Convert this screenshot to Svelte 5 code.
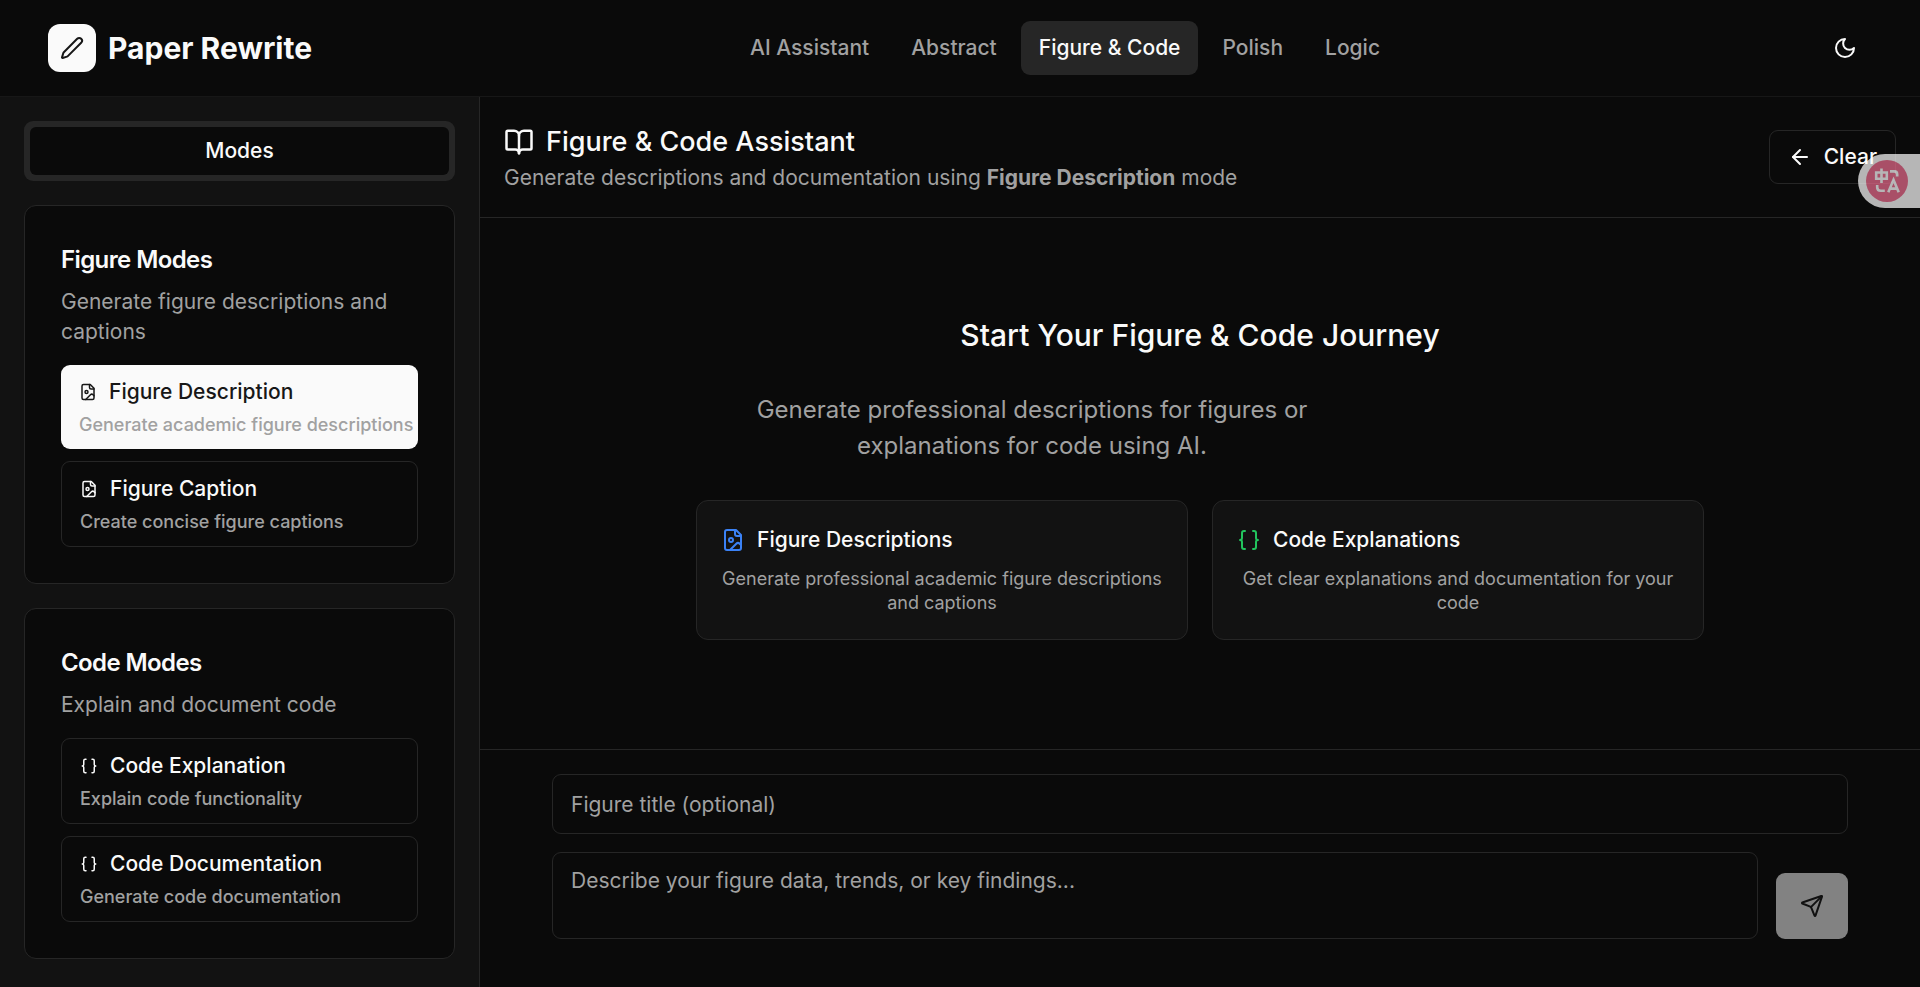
<script>
  const navItems = ['AI Assistant', 'Abstract', 'Figure & Code', 'Polish', 'Logic'];

  const groups = [
    {
      title: 'Figure Modes',
      text: 'Generate figure descriptions and captions',
      modes: [
        { name: 'Figure Description', text: 'Generate academic figure descriptions', icon: 'image' },
        { name: 'Figure Caption', text: 'Create concise figure captions', icon: 'image' }
      ]
    },
    {
      title: 'Code Modes',
      text: 'Explain and document code',
      modes: [
        { name: 'Code Explanation', text: 'Explain code functionality', icon: 'braces' },
        { name: 'Code Documentation', text: 'Generate code documentation', icon: 'braces' }
      ]
    }
  ];

  const features = [
    {
      title: 'Figure Descriptions',
      text: 'Generate professional academic figure descriptions and captions',
      icon: 'image',
      color: 'blue'
    },
    {
      title: 'Code Explanations',
      text: 'Get clear explanations and documentation for your code',
      icon: 'braces',
      color: 'green'
    }
  ];

  // Stroke paths on a 24x24 grid
  const icons = {
    pen: ['M21.174 6.812a1 1 0 0 0-3.986-3.987L3.842 16.174a2 2 0 0 0-.5.83l-1.321 4.352a.5.5 0 0 0 .623.622l4.353-1.32a2 2 0 0 0 .83-.497z'],
    moon: ['M12 3a6 6 0 0 0 9 9 9 9 0 1 1-9-9Z'],
    book: [
      'M12 7v14',
      'M3 18a1 1 0 0 1-1-1V4a1 1 0 0 1 1-1h5a4 4 0 0 1 4 4 4 4 0 0 1 4-4h5a1 1 0 0 1 1 1v13a1 1 0 0 1-1 1h-6a3 3 0 0 0-3 3 3 3 0 0 0-3-3z'
    ],
    arrow: ['m12 19-7-7 7-7', 'M19 12H5'],
    image: [
      'M15 2H6a2 2 0 0 0-2 2v16a2 2 0 0 0 2 2h12a2 2 0 0 0 2-2V7Z',
      'M14 2v4a2 2 0 0 0 2 2h4',
      'M12 12a2 2 0 1 1-4 0 2 2 0 0 1 4 0Z',
      'm20 17-1.296-1.296a2.41 2.41 0 0 0-3.408 0L9 22'
    ],
    braces: [
      'M8 3H7a2 2 0 0 0-2 2v5a2 2 0 0 1-2 2 2 2 0 0 1 2 2v5c0 1.1.9 2 2 2h1',
      'M16 21h1a2 2 0 0 0 2-2v-5c0-1.1.9-2 2-2a2 2 0 0 1-2-2V5a2 2 0 0 0-2-2h-1'
    ],
    send: [
      'M14.536 21.686a.5.5 0 0 0 .937-.024l6.5-19a.496.496 0 0 0-.635-.635l-19 6.5a.5.5 0 0 0-.024.937l7.93 3.18a2 2 0 0 1 1.112 1.11z',
      'm21.854 2.147-10.94 10.939'
    ]
  };

  let activeNav = $state('Figure & Code');
  let activeMode = $state('Figure Description');
  let title = $state('');
  let content = $state('');

  function clearAll() {
    title = '';
    content = '';
  }
</script>

{#snippet icon(name, size)}
  <svg
    width={size}
    height={size}
    viewBox="0 0 24 24"
    fill="none"
    stroke="currentColor"
    stroke-width="2"
    stroke-linecap="round"
    stroke-linejoin="round"
  >
    {#each icons[name] as d}
      <path {d} />
    {/each}
  </svg>
{/snippet}

<div class="app">
  <header class="topbar">
    <div class="brand">
      <span class="logo">{@render icon('pen', 24)}</span>
      <span class="brand-name">Paper Rewrite</span>
    </div>
    <nav>
      {#each navItems as item}
        <button class="nav-item" class:active={activeNav === item} onclick={() => (activeNav = item)}>{item}</button>
      {/each}
    </nav>
    <button class="theme" aria-label="Toggle theme">{@render icon('moon', 24)}</button>
  </header>

  <div class="body">
    <aside>
      <div class="tabs">
        <button class="tab">Modes</button>
      </div>
      {#each groups as group}
        <section class="card">
          <h3>{group.title}</h3>
          <p class="card-text">{group.text}</p>
          <div class="modes">
            {#each group.modes as mode}
              <button class="mode" class:selected={activeMode === mode.name} onclick={() => (activeMode = mode.name)}>
                <span class="mode-name">{@render icon(mode.icon, 18)}{mode.name}</span>
                <span class="mode-text">{mode.text}</span>
              </button>
            {/each}
          </div>
        </section>
      {/each}
    </aside>

    <main>
      <div class="main-header">
        <div>
          <h1>{@render icon('book', 30)}Figure & Code Assistant</h1>
          <p>Generate descriptions and documentation using <strong>{activeMode}</strong> mode</p>
        </div>
        <button class="clear" onclick={clearAll}>{@render icon('arrow', 24)}Clear</button>
      </div>

      <div class="empty">
        <div class="empty-inner">
          <h2>Start Your Figure & Code Journey</h2>
          <p class="lead">Generate professional descriptions for figures or explanations for code using AI.</p>
          <div class="features">
            {#each features as feature}
              <div class="feature">
                <div class="feature-title">
                  <span class="feature-icon {feature.color}">{@render icon(feature.icon, 24)}</span>
                  {feature.title}
                </div>
                <p>{feature.text}</p>
              </div>
            {/each}
          </div>
        </div>
      </div>

      <div class="composer">
        <input type="text" bind:value={title} placeholder="Figure title (optional)" />
        <div class="composer-row">
          <textarea bind:value={content} placeholder="Describe your figure data, trends, or key findings..."></textarea>
          <button class="send" aria-label="Send" disabled={!content}>{@render icon('send', 24)}</button>
        </div>
      </div>
    </main>
  </div>

  <div class="translate">
    <span class="translate-dot">
      <svg width="42" height="42" viewBox="0 0 42 42" fill="none" stroke="#fff" stroke-width="2.6">
        <path d="M10.2 12.5h10.6v6.3h-10.6zM15.5 8.5v14.5" />
        <path d="M24 11.4h4.2q3 0 3 3v2.2" />
        <path d="M11.2 25v2.2q0 3.6 3.6 3.6h4" />
        <path d="M22.3 32.2l5.2-12.4 5.2 12.4M24 28.6h7" />
      </svg>
    </span>
  </div>
</div>

<style>
  :global(body) {
    background-color: #0a0a0a;
  }

  .app {
    position: relative;
    display: flex;
    flex-direction: column;
    height: 100vh;
    overflow: hidden;
    background-color: #0a0a0a;
    color: #fafafa;
    font-family: Inter, "Liberation Sans", sans-serif;
    font-size: 21px;
    line-height: 30px;
  }

  h1, h2, h3, p {
    margin: 0;
  }

  svg {
    display: block;
    flex-shrink: 0;
  }

  button {
    box-sizing: border-box;
    margin: 0;
    padding: 0;
    border: none;
    background: none;
    color: inherit;
    font: inherit;
    font-weight: 500;
    cursor: pointer;
  }

  .topbar {
    display: flex;
    align-items: center;
    justify-content: space-between;
    height: 96px;
    padding: 0 48px;
    border-bottom: 1px solid #171717;
  }

  .brand {
    display: flex;
    align-items: center;
    gap: 12px;
  }

  .logo {
    display: flex;
    align-items: center;
    justify-content: center;
    width: 48px;
    height: 48px;
    border-radius: 12px;
    background-color: #fafafa;
    color: #171717;
  }

  .brand-name {
    font-size: 30px;
    font-weight: 700;
  }

  nav {
    display: flex;
    gap: 6px;
  }

  .nav-item {
    height: 54px;
    padding: 0 18px;
    border-radius: 9px;
    color: #a1a1a1;
  }

  .nav-item.active {
    background-color: #262626;
    color: #fafafa;
  }

  .theme {
    display: flex;
    align-items: center;
    justify-content: center;
    width: 54px;
    height: 54px;
  }

  .body {
    display: flex;
    flex: 1;
    min-height: 0;
  }

  aside {
    box-sizing: border-box;
    display: flex;
    flex-direction: column;
    gap: 24px;
    width: 480px;
    padding: 24px;
    border-right: 1px solid #262626;
    background-color: #121212;
  }

  .tabs {
    display: flex;
    padding: 6px;
    border-radius: 9px;
    background-color: #262626;
  }

  .tab {
    flex: 1;
    height: 48px;
    border-radius: 6px;
    background-color: #0a0a0a;
  }

  .card {
    padding: 36px;
    border: 1px solid #262626;
    border-radius: 12px;
    background-color: #0a0a0a;
  }

  .card h3 {
    margin-bottom: 10px;
    font-size: 24px;
    font-weight: 600;
    line-height: 35px;
    letter-spacing: -0.025em;
  }

  .card-text {
    margin-bottom: 18px;
    color: #a1a1a1;
  }

  .modes {
    display: flex;
    flex-direction: column;
    gap: 12px;
  }

  .mode {
    display: flex;
    flex-direction: column;
    gap: 6px;
    padding: 12px 18px;
    border: 1px solid #262626;
    border-radius: 9px;
    text-align: left;
    white-space: nowrap;
  }

  .mode.selected {
    border: none;
    background-color: #fafafa;
    color: #171717;
  }

  .mode-name {
    display: flex;
    align-items: center;
    gap: 12px;
  }

  .mode-text {
    color: #a1a1a1;
    font-size: 18px;
    line-height: 24px;
  }

  main {
    display: flex;
    flex: 1;
    flex-direction: column;
    min-width: 0;
  }

  .main-header {
    display: flex;
    align-items: center;
    justify-content: space-between;
    padding: 24px;
    border-bottom: 1px solid #262626;
  }

  h1 {
    display: flex;
    align-items: center;
    gap: 12px;
    font-size: 27px;
    font-weight: 500;
    line-height: 41px;
  }

  .main-header p {
    margin-top: 1px;
    color: #a1a1a1;
  }

  .clear {
    display: flex;
    align-items: center;
    gap: 12px;
    height: 54px;
    padding: 0 18px;
    border: 1px solid #262626;
    border-radius: 9px;
  }

  .empty {
    display: flex;
    flex: 1;
    justify-content: center;
    padding-top: 97px;
  }

  .empty-inner {
    width: 1008px;
    text-align: center;
  }

  h2 {
    margin-bottom: 37px;
    font-size: 30px;
    font-weight: 500;
    line-height: 40px;
  }

  .lead {
    max-width: 672px;
    margin-bottom: 36px;
    color: #a1a1a1;
    font-size: 24px;
    line-height: 36px;
  }

  .features {
    display: grid;
    grid-template-columns: 1fr 1fr;
    gap: 24px;
  }

  .feature {
    padding: 24px;
    border: 1px solid #262626;
    border-radius: 12px;
    background-color: #121212;
  }

  .feature-title {
    display: flex;
    align-items: center;
    gap: 12px;
    margin-bottom: 12px;
    font-weight: 500;
  }

  .feature p {
    color: #a1a1a1;
    font-size: 18px;
    line-height: 24px;
  }

  .blue {
    color: #3b82f6;
  }

  .green {
    color: #22c55e;
  }

  .composer {
    display: flex;
    flex-direction: column;
    gap: 18px;
    padding: 24px 72px 48px;
    border-top: 1px solid #262626;
  }

  .composer-row {
    display: flex;
    align-items: flex-end;
    gap: 18px;
  }

  input,
  textarea {
    box-sizing: border-box;
    margin: 0;
    border: 1px solid #262626;
    border-radius: 9px;
    outline: none;
    background-color: #0a0a0a;
    color: #fafafa;
    font: inherit;
  }

  input {
    height: 60px;
    padding: 0 18px;
  }

  textarea {
    flex: 1;
    height: 87px;
    padding: 13px 18px 12px;
    resize: none;
  }

  input::placeholder,
  textarea::placeholder {
    color: #a1a1a1;
  }

  .send {
    display: flex;
    align-items: center;
    justify-content: center;
    width: 72px;
    height: 66px;
    border-radius: 9px;
    background-color: #fafafa;
    color: #171717;
  }

  .send:disabled {
    background-color: #828282;
    color: #111;
  }

  /* floating translate handle on the right edge */
  .translate {
    position: absolute;
    top: 154px;
    right: 0;
    display: flex;
    align-items: center;
    box-sizing: border-box;
    width: 62px;
    height: 54px;
    padding-left: 8px;
    border-radius: 27px 0 0 27px;
    background-color: #fff;
    opacity: 0.7;
  }

  .translate-dot {
    width: 42px;
    height: 42px;
    border-radius: 50%;
    background-color: #ed6d8f;
  }
</style>
